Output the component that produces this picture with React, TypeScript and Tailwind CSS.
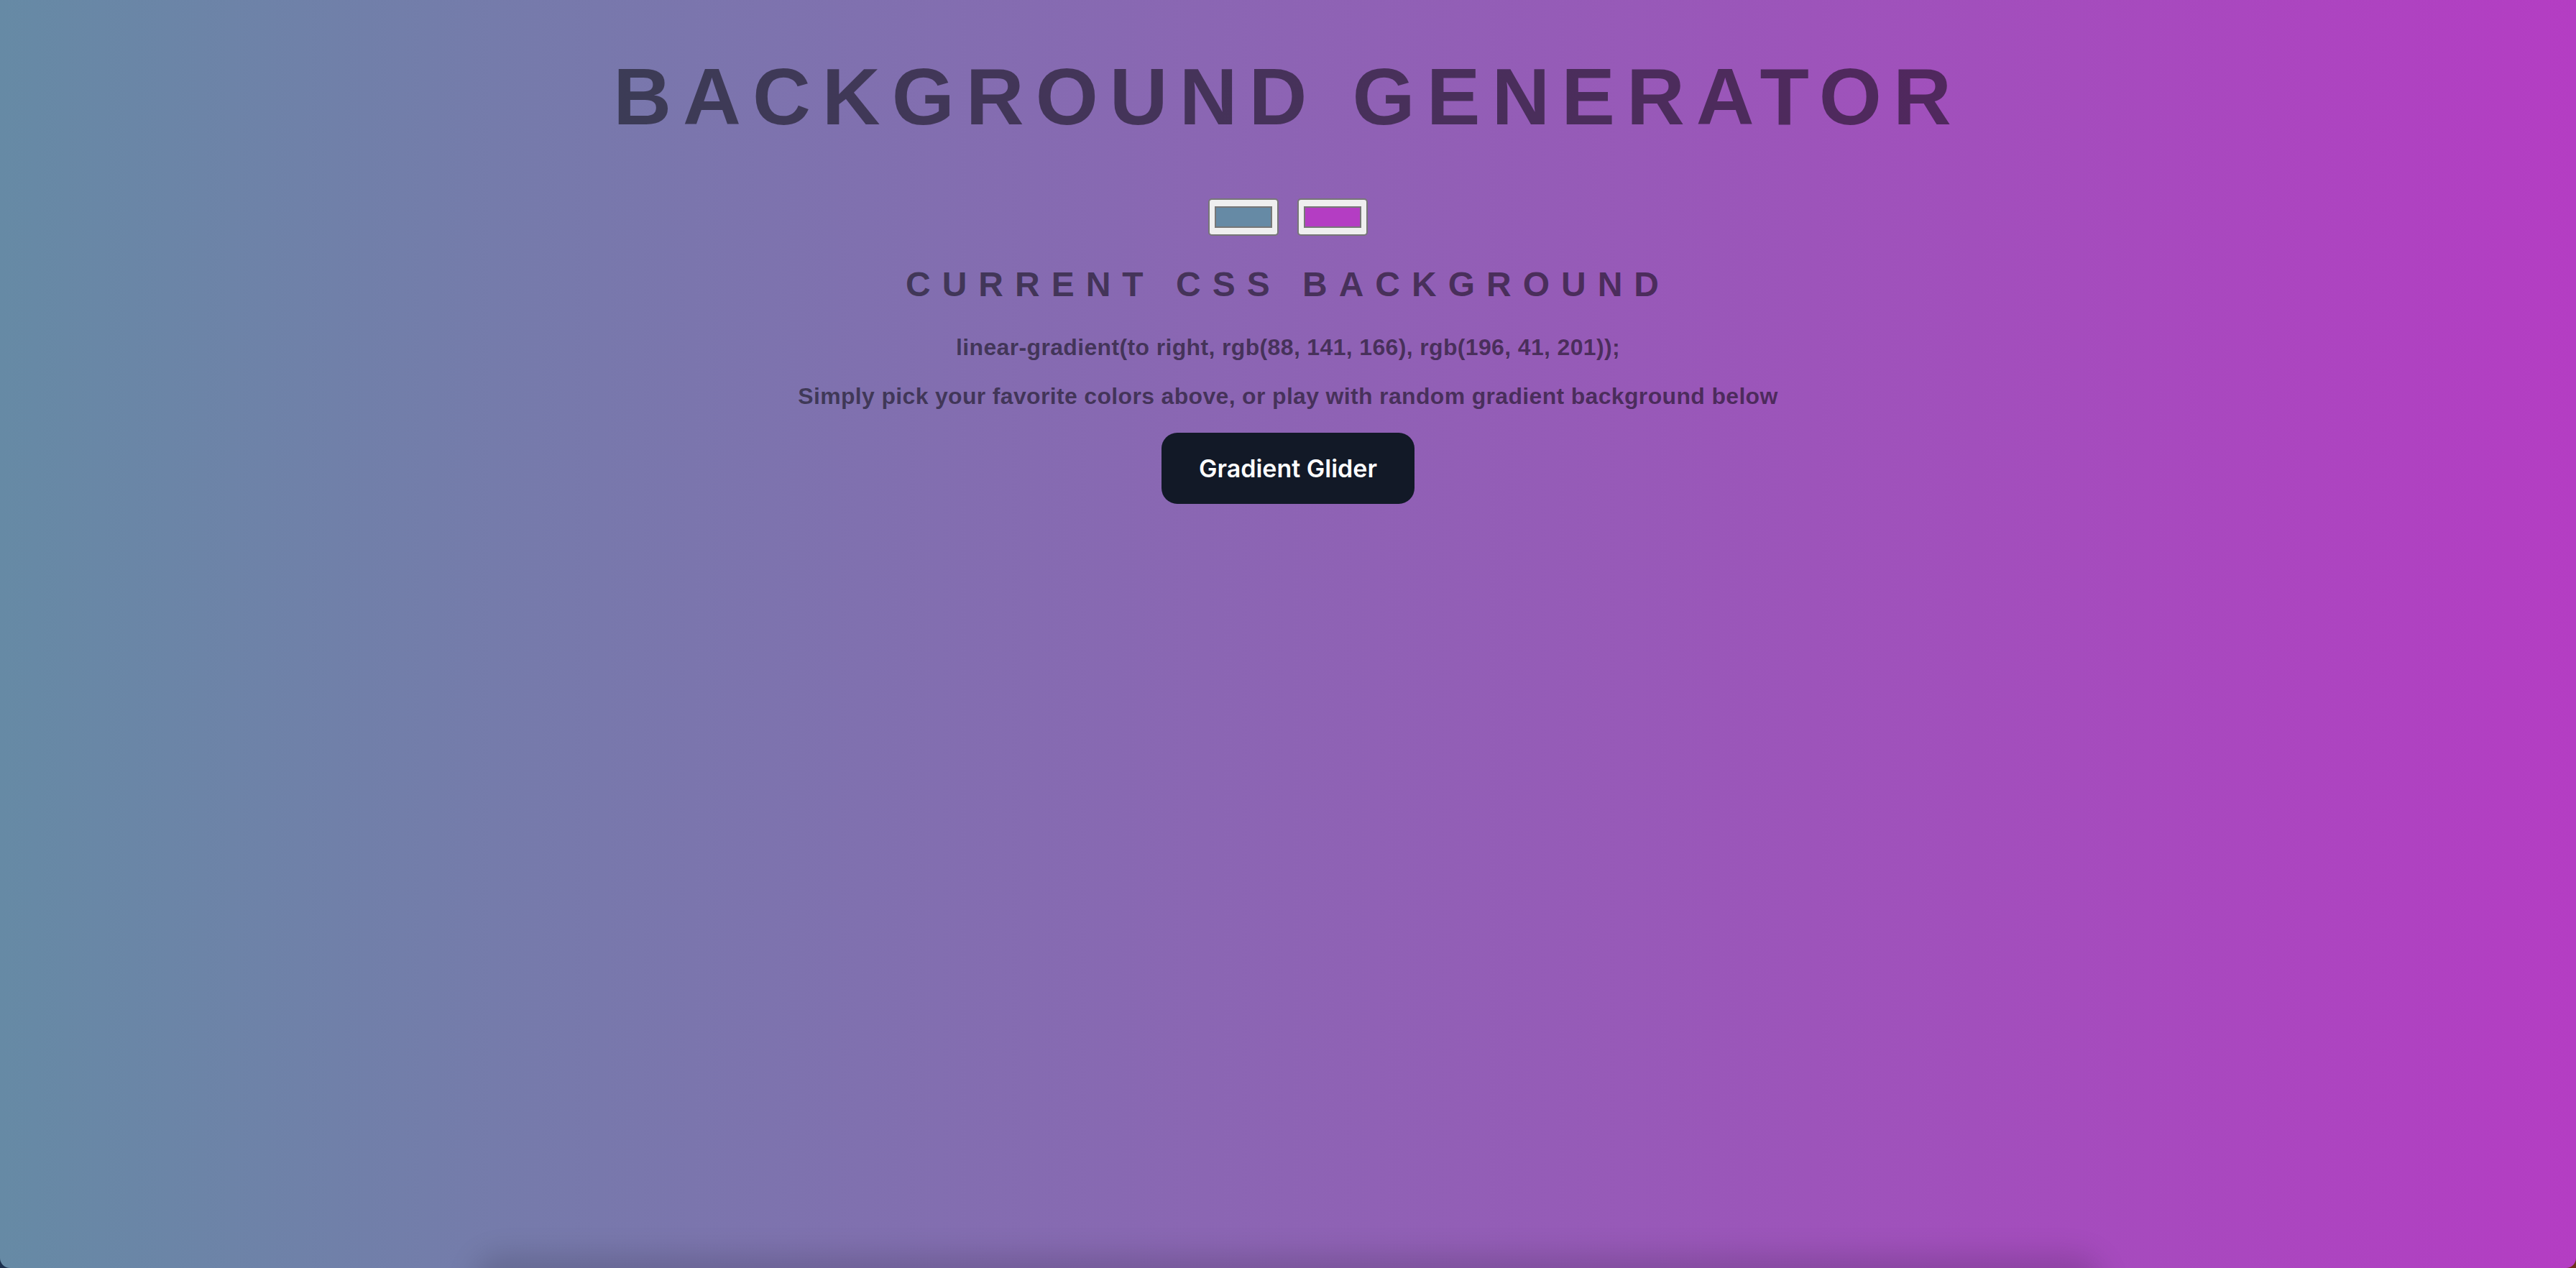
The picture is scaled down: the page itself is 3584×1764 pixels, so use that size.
import { useState } from "react";

const START = "#668aa5";
const END = "#b43dc3";

function ColorSwatch({ color }: { color: string }) {
    return (
        <div className="w-[98px] h-[52px] rounded-[5px] border-2 border-[#777777] bg-[#efefef] px-[7px] py-[9px]">
            <div className="w-full h-full border-2 border-[#777777]" style={{ backgroundColor: color }} />
        </div>
    );
}

export default function App() {
    const [colors] = useState({ from: START, to: END });

    return (
        <div className="h-screen w-full overflow-hidden bg-[linear-gradient(to_right,#1b2f4d,#70301e)]">
            <div className="h-full w-full overflow-hidden rounded-b-[14px] bg-[linear-gradient(to_right,#668aa5,#b43dc3)] flex flex-col items-center font-['Liberation_Sans',Arial,sans-serif] text-black/50">

                <h1 className="mt-[79px] text-[112px] leading-[112px] font-bold tracking-[16px] whitespace-nowrap">
                    BACKGROUND GENERATOR
                </h1>

                <div className="mt-[85px] flex gap-[26px]">
                    <ColorSwatch color={colors.from} />
                    <ColorSwatch color={colors.to} />
                </div>

                <h3 className="mt-[44px] text-[48px] leading-[48px] font-bold tracking-[16px] whitespace-nowrap">
                    CURRENT CSS BACKGROUND
                </h3>

                <p className="mt-[47px] text-[32px] leading-[32px] font-bold tracking-[0.35px] whitespace-nowrap">
                    linear-gradient(to right, rgb(88, 141, 166), rgb(196, 41, 201));
                </p>

                <p className="mt-[36px] text-[32px] leading-[32px] font-bold tracking-[0.33px] whitespace-nowrap">
                    Simply pick your favorite colors above, or play with random gradient background below
                </p>

                <button className="mt-[35px] h-[99px] px-[52px] rounded-[22px] bg-[#121927] text-white font-['Inter',sans-serif] font-semibold text-[34px]">
                    Gradient Glider
                </button>

                {/* card that sits just under the fold, only its shadow shows */}
                <div className="mt-auto w-[2240px] h-[40px] shrink-0 translate-y-[40px] rounded-t-[24px] shadow-[0_-6px_40px_12px_rgba(0,0,0,0.15)]" />
            </div>
        </div>
    );
}
